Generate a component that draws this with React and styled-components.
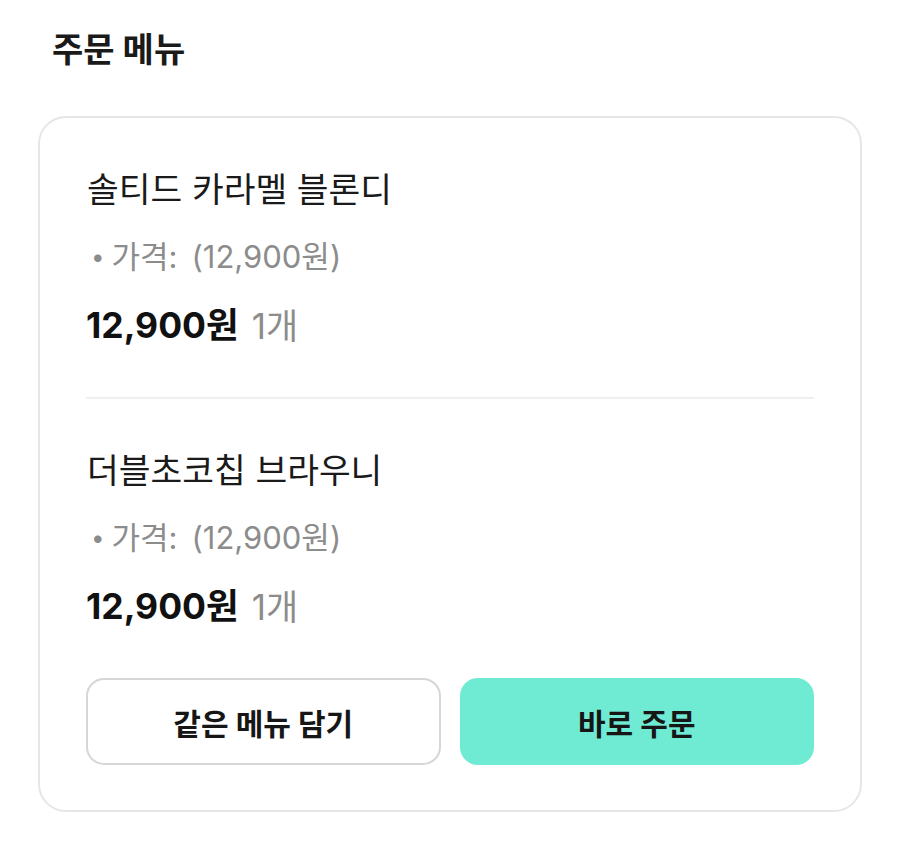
import styled, { createGlobalStyle } from 'styled-components';

const GlobalStyle = createGlobalStyle`
  body {
    margin: 0;
    background: #fff;
    font-family: Inter, "Noto Sans CJK KR", "Noto Sans", sans-serif;
    color: #1a1a1a;
  }
`;

const Page = styled.div`
  padding: 27px 38px 40px;
`;

const Title = styled.h2`
  margin: 0 0 43px 14px;
  font-size: 34px;
  font-weight: 700;
  line-height: 46px;
  color: #1a1a1a;
`;

const Card = styled.section`
  border: 2px solid #e6e6e6;
  border-radius: 28px;
  padding: 0 46px 45px;
`;

const Item = styled.div`
  display: flex;
  flex-direction: column;
  padding: 49px 0 50px;
  & + & {
    border-top: 2px solid #f0f0f0;
  }
`;

const Name = styled.div`
  font-size: 34.5px;
  line-height: 46px;
  font-weight: 400;
  color: #1a1a1a;
  margin-left: 1px;
`;

const Option = styled.div`
  margin-top: 24px;
  font-size: 31px;
  line-height: 40px;
  color: #8c8c8c;
  display: flex;
  align-items: center;
`;

const Bullet = styled.span`
  font-size: 24px;
  margin: 0 7px 0 5px;
`;

const OptionPrice = styled.span`
  margin-left: 14px;
`;

const PriceRow = styled.div`
  margin-top: 28px;
  height: 42px;
  display: flex;
  align-items: center;
  gap: 13px;
`;

const Price = styled.span`
  font-size: 35.5px;
  line-height: 42px;
  font-weight: 700;
  color: #111;
`;

const Qty = styled.span`
  font-size: 35px;
  line-height: 42px;
  color: #8c8c8c;
`;

const Actions = styled.div`
  display: grid;
  grid-template-columns: 1fr 1fr;
  gap: 19px;
`;

const Button = styled.button`
  height: 87px;
  border-radius: 18px;
  font-family: inherit;
  font-size: 30px;
  font-weight: 700;
  color: #161616;
  cursor: pointer;
  border: ${({ $primary }) => ($primary ? 'none' : '2px solid #d6d6d6')};
  background: ${({ $primary }) => ($primary ? '#6febd4' : '#fff')};
`;

const items = [
  { name: '솔티드 카라멜 블론디', option: '12,900원', price: '12,900원', qty: 1 },
  { name: '더블초코칩 브라우니', option: '12,900원', price: '12,900원', qty: 1 },
];

export default function App() {
  return (
    <>
      <GlobalStyle />
      <Page>
        <Title>주문 메뉴</Title>
        <Card>
          {items.map((it) => (
            <Item key={it.name}>
              <Name>{it.name}</Name>
              <Option>
                <Bullet>•</Bullet>가격:
                <OptionPrice>({it.option})</OptionPrice>
              </Option>
              <PriceRow>
                <Price>{it.price}</Price>
                <Qty>{it.qty}개</Qty>
              </PriceRow>
            </Item>
          ))}
          <Actions>
            <Button>같은 메뉴 담기</Button>
            <Button $primary>바로 주문</Button>
          </Actions>
        </Card>
      </Page>
    </>
  );
}
